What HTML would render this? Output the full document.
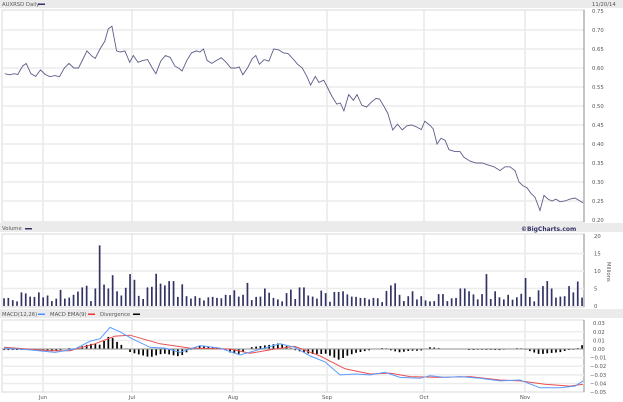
<!DOCTYPE html>
<html><head><meta charset="utf-8"><style>
html,body{margin:0;padding:0;background:#fff;width:623px;height:402px;overflow:hidden}
svg{display:block}
text{font-family:"DejaVu Sans","Liberation Sans",sans-serif;font-size:5.3px;fill:#555}
</style></head><body>
<svg id="s" width="623" height="402" xmlns="http://www.w3.org/2000/svg">
<rect x="0" y="0" width="623" height="8" fill="#ebebeb"/>
<text x="2" y="6">AUXRSD Daily</text><rect x="38" y="3.5" width="7" height="1.5" fill="#333366"/>
<text x="592" y="6">11/20/14</text>
<rect x="0" y="223" width="623" height="9" fill="#ebebeb"/>
<text x="2" y="230">Volume</text><rect x="25" y="228" width="7" height="1.5" fill="#333366"/>
<text x="521" y="231" style="font-weight:bold;fill:#333366;font-size:6px">©BigCharts.com</text>
<rect x="0" y="309" width="623" height="9" fill="#ebebeb"/>
<text x="2" y="316">MACD(12,26)</text><rect x="38" y="313.5" width="7" height="1.5" fill="#4a90ff"/>
<text x="50" y="316">MACD EMA(9)</text><rect x="88" y="313.5" width="7" height="1.5" fill="#e33"/>
<text x="100" y="316">Divergence</text><rect x="133" y="313.5" width="7" height="1.5" fill="#000"/>
<g id="g"></g>
</svg>
<script>
var g=document.getElementById('g'),h='';
function L(x1,y1,x2,y2,c,w){h+='<line x1="'+x1+'" y1="'+y1+'" x2="'+x2+'" y2="'+y2+'" stroke="'+c+'" stroke-width="'+(w||1)+'"/>';}
function T(x,y,s){h+='<text x="'+x+'" y="'+y+'">'+s+'</text>';}
var X0=2,X1=584,vx=[43,132,233,327,424,525];
var P=[[10,222],[234,307],[320,392]];
P.forEach(function(p){h+='<rect x="'+X0+'" y="'+p[0]+'" width="'+(X1-X0)+'" height="'+(p[1]-p[0])+'" fill="#fff" stroke="#d8d8d8"/>';
vx.forEach(function(x){L(x,p[0],x,p[1],'#dcdcdc');});});
function py(v){return 220-(v-0.20)*380;}
for(var v=0.20;v<0.76;v+=0.05){var y=py(v);if(v>0.21&&v<0.74)L(X0,y,X1,y,'#ececec',1.5);T(592,y+2,v.toFixed(2));}
L(X1,10,X1,222,'#888');L(X1,234,X1,307,'#888');L(X1,320,X1,392,'#888');
var a=[[4,.585],[8,.582],[12,.585],[15,.583],[19,.605],[22,.612],[26,.585],[30,.578],[34,.595],[38,.583],[42,.577],[46,.58],[50,.577],[54,.6],[58,.612],[62,.6],[66,.6],[70,.625],[73,.645],[77,.632],[80,.625],[84,.65],[88,.67],[91,.703],[94,.71],[98,.645],[101,.642],[105,.645],[109,.615],[112,.633],[116,.615],[120,.62],[124,.622],[128,.6],[131,.585],[135,.618],[139,.633],[143,.628],[147,.605],[150,.6],[153,.592],[157,.62],[161,.64],[165,.645],[168,.642],[171,.65],[174,.62],[178,.612],[182,.62],[186,.627],[190,.615],[194,.6],[198,.6],[201,.603],[204,.582],[208,.6],[212,.625],[215,.633],[218,.61],[222,.622],[226,.618],[230,.65],[234,.648],[238,.64],[242,.638],[246,.625],[250,.61],[254,.6],[258,.577],[261,.555],[265,.578],[268,.562],[272,.568],[275,.55],[279,.525],[283,.505],[286,.508],[289,.487],[293,.53],[297,.515],[300,.53],[304,.502],[308,.497],[312,.51],[316,.52],[319,.518],[323,.497],[326,.48],[330,.437],[334,.452],[338,.437],[342,.448],[346,.45],[350,.445],[354,.438],[357,.46],[361,.45],[364,.44]];
var pts=a.map(function(p){return [p[0]*1.19,p[1]];});
[[437,.40],[441,.415],[445,.41],[449,.385],[455,.38],[460,.38],[464,.365],[470,.355],[476,.35],[482,.35],[488,.345],[494,.34],[500,.33],[505,.34],[510,.34],[515,.33],[519,.30],[523,.29],[527,.285],[531,.27],[535,.26],[540,.225],[544,.265],[548,.255],[552,.25],[556,.255],[560,.248],[565,.25],[570,.255],[575,.258],[580,.25],[583,.245]].forEach(function(p){pts.push(p);});
h+='<polyline fill="none" stroke="#5e5e8a" stroke-width="0.9" points="'+pts.map(function(p){return p[0].toFixed(1)+','+py(p[1]).toFixed(1);}).join(' ')+'"/>';
function vy(v){return 306-v*3.5;}
[0,5,10,15,20].forEach(function(v){var y=vy(v);if(v>0&&v<20)L(X0,y,X1,y,'#ececec',1.5);T(594,y+2,v);});
h+='<text x="0" y="0" transform="translate(607,262) rotate(90)">Millions</text>';
var vol=[2.2,2.3,1.7,1.3,3.9,3.6,2.7,2.6,3.9,2.5,3,1.4,2.1,4.6,2.1,2.4,3.2,4.1,5.3,5.8,1.4,5,17.3,6.1,5,8.8,4.2,3,5.2,9.1,7.5,2.9,2,5.3,5.5,9.2,6.4,5.9,7.1,7.1,2.6,6.2,2.8,2.1,2.8,2.3,1.6,2.5,2.6,2.3,2.2,3.2,3.1,4.5,2.7,3.2,6.6,1.7,2.6,2.7,5,3.8,2.3,1.9,1.3,3.7,4.7,2,5.3,5.3,3,2.7,2.1,4.4,3.7,1.2,4,4,4.2,3.3,2.7,2.6,2.3,2.3,1.9,2.3,2.2,1.1,4.3,5.9,6.5,3.2,1.4,2.8,4.2,1.9,2.8,1.6,1.3,1.4,3.4,3.4,1.4,2.2,2.3,5,5,4.2,3.3,1.9,3.4,9.1,2,4.2,2.5,1.9,3.2,1.8,2.5,3.5,8,2.6,1.3,4.5,5.7,7.1,5,2.4,2.7,2.8,5.7,3.9,7,2.4];
var n=vol.length,dx=(582-4)/(n-1);
vol.forEach(function(v,i){var x=4+i*dx;h+='<rect x="'+(x-0.8).toFixed(1)+'" y="'+vy(v).toFixed(1)+'" width="1.7" height="'+(v*3.5).toFixed(1)+'" fill="#333366"/>';});
function my(v){return 349-v*862;}
[0.03,0.02,0.01,0,-0.01,-0.02,-0.03,-0.04,-0.05].forEach(function(v){var y=my(v);if(v<0.03&&v>-0.05)L(X0,y,X1,y,'#ececec',1.5);T(v<0?590:593,y+2,(v<0?'\u2212':'')+Math.abs(v).toFixed(2));});
var B=[[4,.001],[30,-.001],[55,-.004],[75,0],[90,.009],[100,.012],[110,.025],[120,.02],[132,.012],[150,.002],[165,.001],[180,-.004],[200,.004],[220,.001],[240,-.007],[255,-.002],[280,.006],[295,.002],[310,-.008],[325,-.015],[340,-.03],[355,-.029],[370,-.03],[385,-.027],[400,-.033],[420,-.034],[430,-.031],[445,-.033],[460,-.032],[480,-.034],[500,-.037],[520,-.036],[540,-.045],[560,-.045],[575,-.043],[583,-.037]];
var R=[[4,.002],[50,-.002],[70,-.002],[95,.006],[115,.015],[130,.016],[160,.006],[190,.001],[230,0],[250,-.005],[275,0],[295,.003],[320,-.008],[345,-.023],[370,-.029],[390,-.028],[410,-.032],[440,-.033],[470,-.032],[500,-.036],[520,-.037],[545,-.041],[570,-.043],[583,-.041]];
function it(A,x){for(var i=1;i<A.length;i++){if(x<=A[i][0]){var t=(x-A[i-1][0])/(A[i][0]-A[i-1][0]);return A[i-1][1]+t*(A[i][1]-A[i-1][1]);}}return A[A.length-1][1];}
for(var i=0;i<n;i++){var x=4+i*dx,d=(it(B,x)-it(R,x))*1.3;var y0=my(0),y1=my(d);h+='<rect x="'+(x-0.8).toFixed(1)+'" y="'+Math.min(y0,y1).toFixed(1)+'" width="1.7" height="'+Math.max(0.5,Math.abs(y1-y0)).toFixed(1)+'" fill="#000"/>';}
L(X0,my(0),X1,my(0),'#999');
function pl(A,c){h+='<polyline fill="none" stroke="'+c+'" stroke-width="1" points="'+A.map(function(p){return p[0]+','+my(p[1]).toFixed(1);}).join(' ')+'"/>';}
pl(R,'#e85050');pl(B,'#5a9cff');
[['Jun',43],['Jul',132],['Aug',233],['Sep',327],['Oct',424],['Nov',525]].forEach(function(m){h+='<text x="'+m[1]+'" y="399" text-anchor="middle">'+m[0]+'</text>';});
g.innerHTML=h;
</script>
</body></html>
